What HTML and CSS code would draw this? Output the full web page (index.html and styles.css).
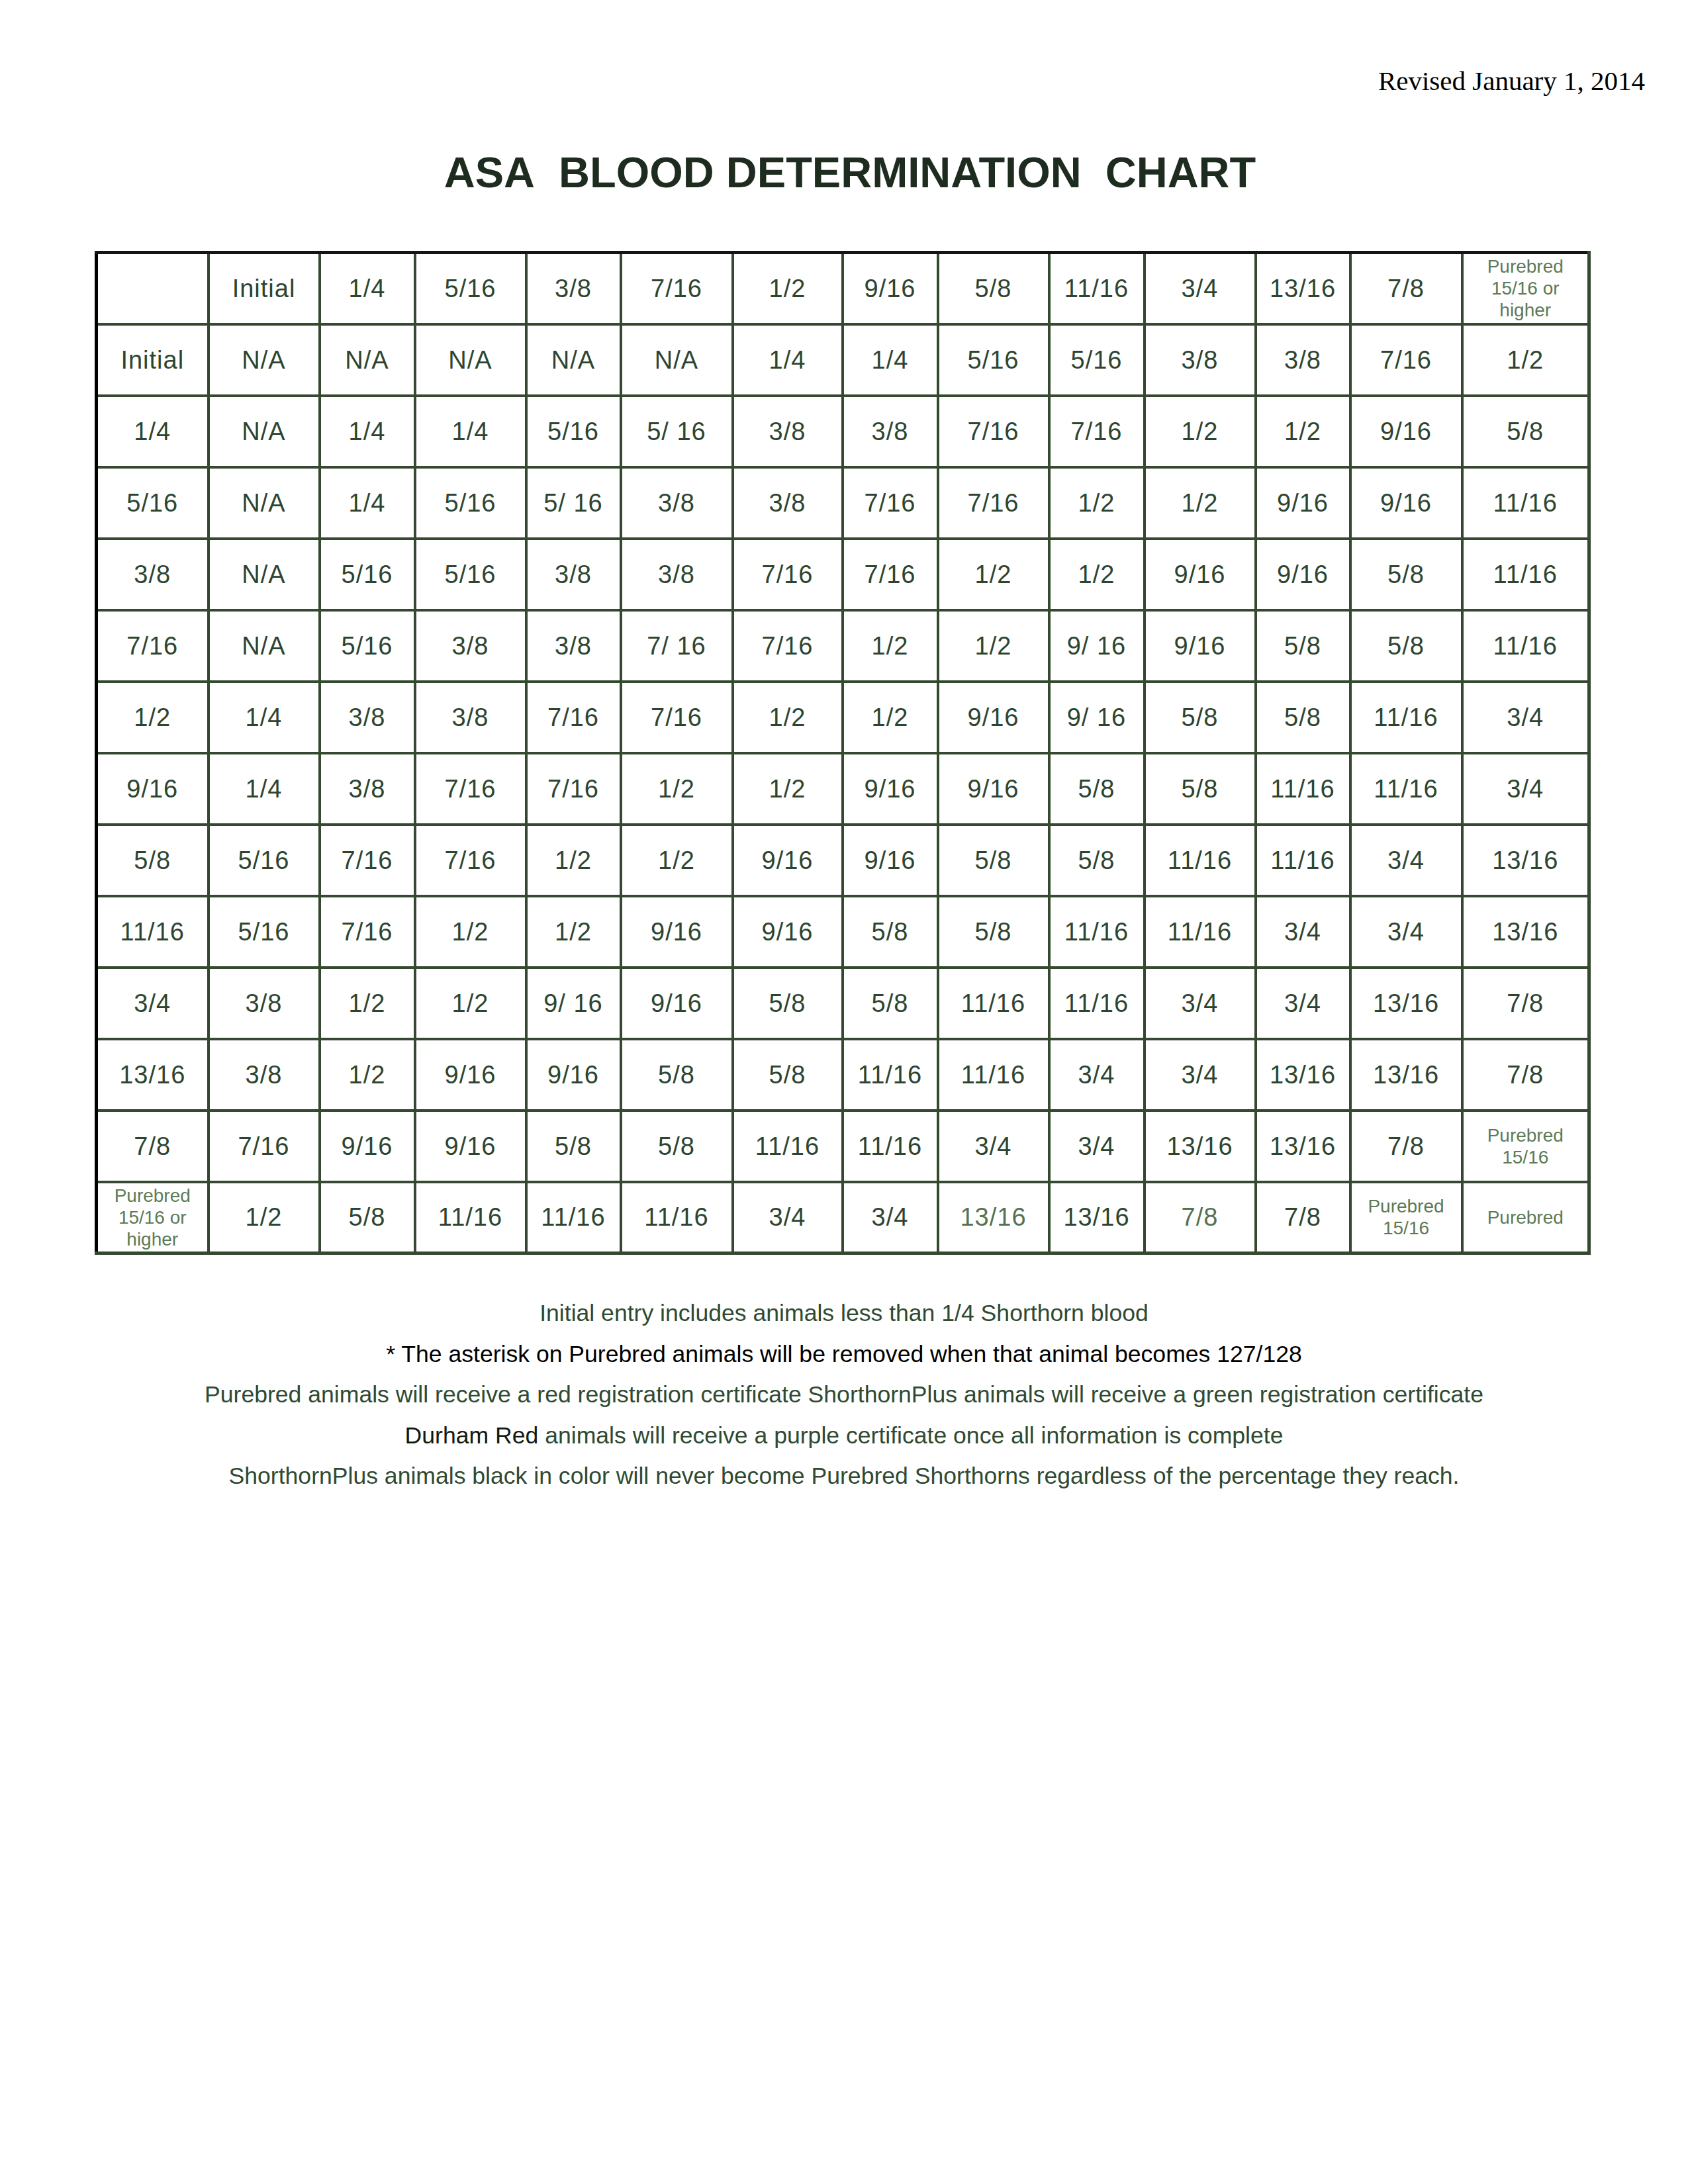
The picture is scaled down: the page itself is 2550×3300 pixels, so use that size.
FILE: index.html
```html
<!DOCTYPE html>
<html>
<head>
<meta charset="utf-8">
<link rel="stylesheet" href="styles.css">
</head>
<body>
<div class="page">
  <div class="revised">Revised January 1, 2014</div>
  <h1 class="title">ASA&nbsp; BLOOD DETERMINATION&nbsp; CHART</h1>
  <table class="chart">
    <colgroup>
      <col class="c169"><col class="c168"><col class="c144"><col class="c168"><col class="c143"><col class="c169"><col class="c166"><col class="c144"><col class="c168"><col class="c144"><col class="c168"><col class="c143"><col class="c169"><col class="c192">
    </colgroup>
    <tr><td></td><td>Initial</td><td>1/4</td><td>5/16</td><td>3/8</td><td>7/16</td><td>1/2</td><td>9/16</td><td>5/8</td><td>11/16</td><td>3/4</td><td>13/16</td><td>7/8</td><td class="pb">Purebred<br>15/16 or<br>higher</td></tr>
    <tr><td>Initial</td><td>N/A</td><td>N/A</td><td>N/A</td><td>N/A</td><td>N/A</td><td>1/4</td><td>1/4</td><td>5/16</td><td>5/16</td><td>3/8</td><td>3/8</td><td>7/16</td><td>1/2</td></tr>
    <tr><td>1/4</td><td>N/A</td><td>1/4</td><td>1/4</td><td>5/16</td><td>5/ 16</td><td>3/8</td><td>3/8</td><td>7/16</td><td>7/16</td><td>1/2</td><td>1/2</td><td>9/16</td><td>5/8</td></tr>
    <tr><td>5/16</td><td>N/A</td><td>1/4</td><td>5/16</td><td>5/ 16</td><td>3/8</td><td>3/8</td><td>7/16</td><td>7/16</td><td>1/2</td><td>1/2</td><td>9/16</td><td>9/16</td><td>11/16</td></tr>
    <tr><td>3/8</td><td>N/A</td><td>5/16</td><td>5/16</td><td>3/8</td><td>3/8</td><td>7/16</td><td>7/16</td><td>1/2</td><td>1/2</td><td>9/16</td><td>9/16</td><td>5/8</td><td>11/16</td></tr>
    <tr><td>7/16</td><td>N/A</td><td>5/16</td><td>3/8</td><td>3/8</td><td>7/ 16</td><td>7/16</td><td>1/2</td><td>1/2</td><td>9/ 16</td><td>9/16</td><td>5/8</td><td>5/8</td><td>11/16</td></tr>
    <tr><td>1/2</td><td>1/4</td><td>3/8</td><td>3/8</td><td>7/16</td><td>7/16</td><td>1/2</td><td>1/2</td><td>9/16</td><td>9/ 16</td><td>5/8</td><td>5/8</td><td>11/16</td><td>3/4</td></tr>
    <tr><td>9/16</td><td>1/4</td><td>3/8</td><td>7/16</td><td>7/16</td><td>1/2</td><td>1/2</td><td>9/16</td><td>9/16</td><td>5/8</td><td>5/8</td><td>11/16</td><td>11/16</td><td>3/4</td></tr>
    <tr><td>5/8</td><td>5/16</td><td>7/16</td><td>7/16</td><td>1/2</td><td>1/2</td><td>9/16</td><td>9/16</td><td>5/8</td><td>5/8</td><td>11/16</td><td>11/16</td><td>3/4</td><td>13/16</td></tr>
    <tr><td>11/16</td><td>5/16</td><td>7/16</td><td>1/2</td><td>1/2</td><td>9/16</td><td>9/16</td><td>5/8</td><td>5/8</td><td>11/16</td><td>11/16</td><td>3/4</td><td>3/4</td><td>13/16</td></tr>
    <tr><td>3/4</td><td>3/8</td><td>1/2</td><td>1/2</td><td>9/ 16</td><td>9/16</td><td>5/8</td><td>5/8</td><td>11/16</td><td>11/16</td><td>3/4</td><td>3/4</td><td>13/16</td><td>7/8</td></tr>
    <tr><td>13/16</td><td>3/8</td><td>1/2</td><td>9/16</td><td>9/16</td><td>5/8</td><td>5/8</td><td>11/16</td><td>11/16</td><td>3/4</td><td>3/4</td><td>13/16</td><td>13/16</td><td>7/8</td></tr>
    <tr><td>7/8</td><td>7/16</td><td>9/16</td><td>9/16</td><td>5/8</td><td>5/8</td><td>11/16</td><td>11/16</td><td>3/4</td><td>3/4</td><td>13/16</td><td>13/16</td><td>7/8</td><td class="pb">Purebred<br>15/16</td></tr>
    <tr><td class="pb">Purebred<br>15/16 or<br>higher</td><td>1/2</td><td>5/8</td><td>11/16</td><td>11/16</td><td>11/16</td><td>3/4</td><td>3/4</td><td class="lt">13/16</td><td>13/16</td><td class="lt">7/8</td><td>7/8</td><td class="pb">Purebred<br>15/16</td><td class="pb">Purebred</td></tr>
  </table>
  <div class="notes">
    <p class="note green">Initial entry includes animals less than 1/4 Shorthorn blood</p>
    <p class="note black">* The asterisk on Purebred animals will be removed when that animal becomes 127/128</p>
    <p class="note green">Purebred animals will receive a red registration certificate ShorthornPlus animals will receive a green registration certificate</p>
    <p class="note green"><span class="dark">Durham Red</span> animals will receive a purple certificate once all information is complete</p>
    <p class="note green">ShorthornPlus animals black in color will never become Purebred Shorthorns regardless of the percentage they reach.</p>
  </div>
</div>
</body>
</html>
```

FILE: styles.css
```css
html, body {
  margin: 0;
  padding: 0;
  background: #ffffff;
}

.page {
  width: 2550px;
  height: 3300px;
  box-sizing: border-box;
  padding-top: 98px;
}

.revised {
  font-family: "Liberation Serif", "Times New Roman", serif;
  font-size: 41px;
  line-height: 48px;
  color: #000000;
  text-align: right;
  padding-right: 65px;
}

.title {
  margin: 77px 0 0 0;
  padding-left: 18px;
  font-family: "Liberation Sans", Arial, sans-serif;
  font-weight: bold;
  font-size: 65px;
  line-height: 76px;
  color: #1d2c1f;
  text-align: center;
}

.chart {
  margin: 80px 0 0 143px;
  width: 2258px;
  table-layout: fixed;
  border-collapse: collapse;
  border-top: 5px solid #111611;
  border-left: 5px solid #000000;
  border-right: 5px solid #34492f;
  border-bottom: 5px solid #34492f;
}

.c169 { width: 169px; }
.c168 { width: 168px; }
.c166 { width: 166px; }
.c144 { width: 144px; }
.c143 { width: 143px; }
.c192 { width: 192px; }

.chart tr {
  height: 108px;
}

.chart td {
  height: 100px;
  border: 4px solid #34492f;
  padding: 0;
  text-align: center;
  vertical-align: middle;
  font-family: "Liberation Sans", Arial, sans-serif;
  font-size: 38px;
  line-height: 44px;
  letter-spacing: 1px;
  color: #2d4530;
  white-space: pre;
  overflow: hidden;
}

.chart td.pb {
  font-size: 28px;
  line-height: 33px;
  letter-spacing: 0;
  color: #5d7a56;
  white-space: normal;
}

.chart td.lt {
  color: #557251;
}

.notes {
  margin-top: 58px;
}

.note {
  margin: 0;
  font-family: "Liberation Sans", Arial, sans-serif;
  font-size: 35.6px;
  line-height: 61.5px;
  text-align: center;
}

.note.green {
  color: #2f4a31;
}

.note.black {
  color: #000000;
}

.note .dark {
  color: #111a12;
}
```
